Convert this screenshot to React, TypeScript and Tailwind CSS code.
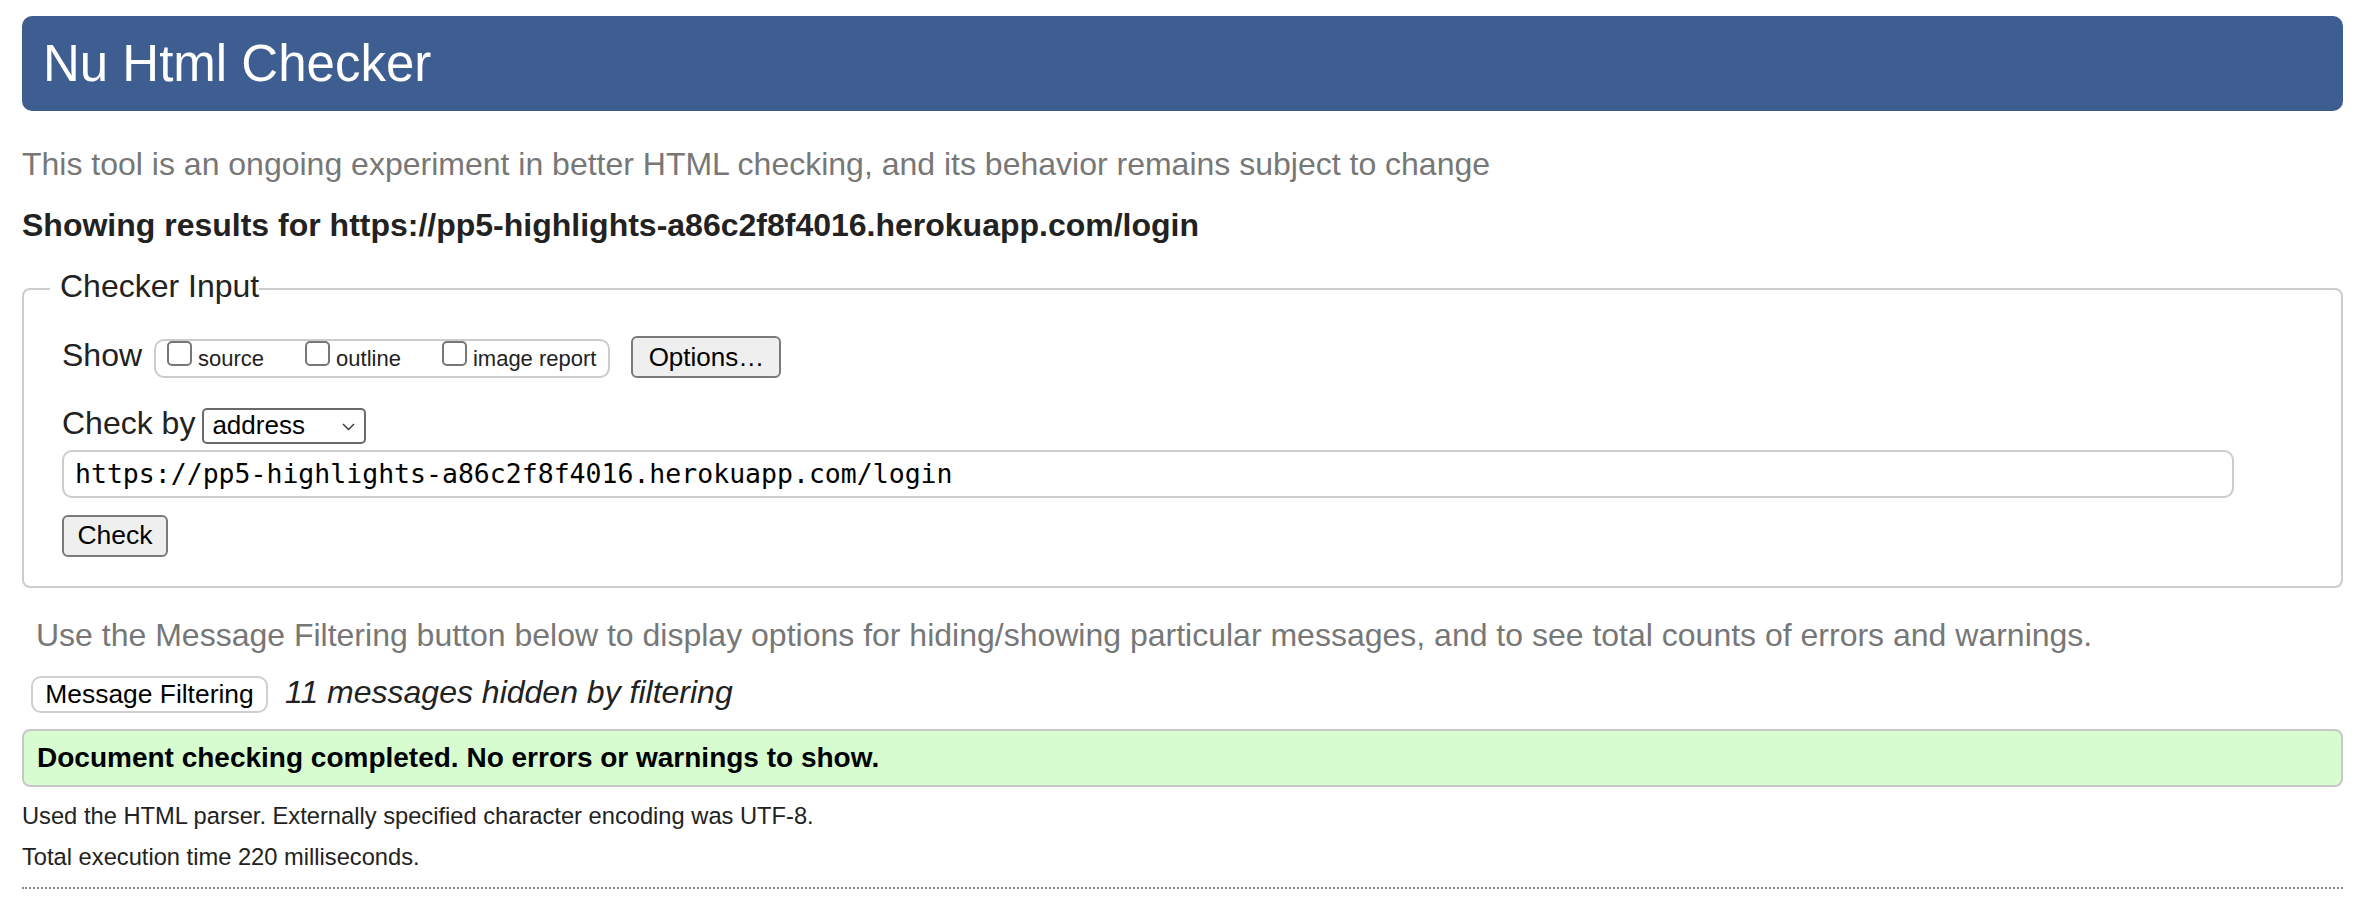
export default function App() {
  return (
    <div className="min-h-screen bg-white pt-[16px] pl-[22px] pr-[17px] pb-[20px] font-['Liberation_Sans',Arial,Helvetica,sans-serif] text-[#222]">
      <header className="flex h-[95px] items-center rounded-[10px] bg-[#3e5d91] pl-[21px]">
        <h1 className="text-[51px] leading-[normal] font-normal text-white">Nu Html Checker</h1>
      </header>

      <p className="mt-[33px] text-[32px] leading-[40px] text-[#777]">
        This tool is an ongoing experiment in better HTML checking, and its behavior remains subject to change
      </p>
      <p className="mt-[21px] text-[32px] leading-[40px] font-bold text-[#222]">
        Showing results for https://pp5-highlights-a86c2f8f4016.herokuapp.com/login
      </p>

      <fieldset className="mt-[21px] rounded-[8px] border-2 border-[#ccc] pb-[29px]">
        <legend className="ml-[26px] pl-[10px] pb-[6px] text-[32px] leading-[40px] text-[#222]">Checker Input</legend>
        <div className="pl-[38px] pt-[24px]">
          <div className="flex items-baseline">
            <span className="text-[32px] leading-[32px]">Show</span>
            <div className="ml-[12px] flex items-baseline rounded-[10px] border-2 border-[#ccc] pl-[11px] pr-[12px]">
              <input type="checkbox" className="h-[25px] w-[25px] appearance-none rounded-[5px] border-2 border-[#777] bg-white" />
              <span className="ml-[6px] text-[22px] leading-[34px]">source</span>
              <input type="checkbox" className="ml-[41px] h-[25px] w-[25px] appearance-none rounded-[5px] border-2 border-[#777] bg-white" />
              <span className="ml-[6px] text-[22px] leading-[34px]">outline</span>
              <input type="checkbox" className="ml-[41px] h-[25px] w-[25px] appearance-none rounded-[5px] border-2 border-[#777] bg-white" />
              <span className="ml-[6px] text-[22px] leading-[34px]">image report</span>
            </div>
            <button className="ml-[21px] flex h-[42px] w-[150px] items-center justify-center rounded-[6px] border-2 border-[#7a7a7a] bg-[#efefef] text-[26px] text-black">
              Options…
            </button>
          </div>

          <div className="mt-[29px] flex items-baseline">
            <span className="text-[32px] leading-[32px]">Check by</span>
            <div className="ml-[7px] flex h-[36px] w-[164px] items-center justify-between rounded-[5px] border-2 border-[#6a6a6a] bg-white pl-[8px] pr-[9px] text-[26px] text-black">
              <span>address</span>
              <svg width="13" height="8" viewBox="0 0 13 8" className="mt-[2px]">
                <polyline points="1,1 6.5,6.5 12,1" fill="none" stroke="#333" strokeWidth="1.4" />
              </svg>
            </div>
          </div>

          <div className="mt-[6px] pr-[107px]">
            <div className="flex h-[48px] items-center rounded-[10px] border-2 border-[#ccc] bg-white pl-[11px] font-['DejaVu_Sans_Mono',Menlo,monospace] text-[26.5px] text-black">
              https://pp5-highlights-a86c2f8f4016.herokuapp.com/login
            </div>
          </div>

          <button className="mt-[17px] flex h-[42px] w-[106px] items-center justify-center rounded-[6px] border-2 border-[#7a7a7a] bg-[#efefef] text-[26.5px] text-black">
            Check
          </button>
        </div>
      </fieldset>

      <p className="mt-[27px] pl-[14px] text-[32px] leading-[40px] text-[#777]">
        Use the Message Filtering button below to display options for hiding/showing particular messages, and to see total counts of errors and warnings.
      </p>

      <div className="mt-[21px] flex items-baseline">
        <button className="ml-[9px] flex h-[37px] w-[237px] items-center justify-center rounded-[10px] border-2 border-[#cfcfcf] bg-white text-[26.4px] text-black">
          Message Filtering
        </button>
        <span className="ml-[17px] text-[32px] leading-[32px] italic text-[#222]">11 messages hidden by filtering</span>
      </div>

      <div className="mt-[16px] flex h-[58px] items-center rounded-[8px] border-2 border-[#c8c8c8] bg-[#d6fcd0] pl-[13px] text-[28px] font-bold text-black">
        Document checking completed. No errors or warnings to show.
      </div>

      <p className="mt-[14px] text-[23.7px] leading-[30px] text-[#222]">
        Used the HTML parser. Externally specified character encoding was UTF-8.
      </p>
      <p className="mt-[11px] text-[23.7px] leading-[30px] text-[#222]">Total execution time 220 milliseconds.</p>

      <hr className="mt-[15px] border-0 border-t-2 border-dotted border-[#8a8a8a]" />
    </div>
  );
}
